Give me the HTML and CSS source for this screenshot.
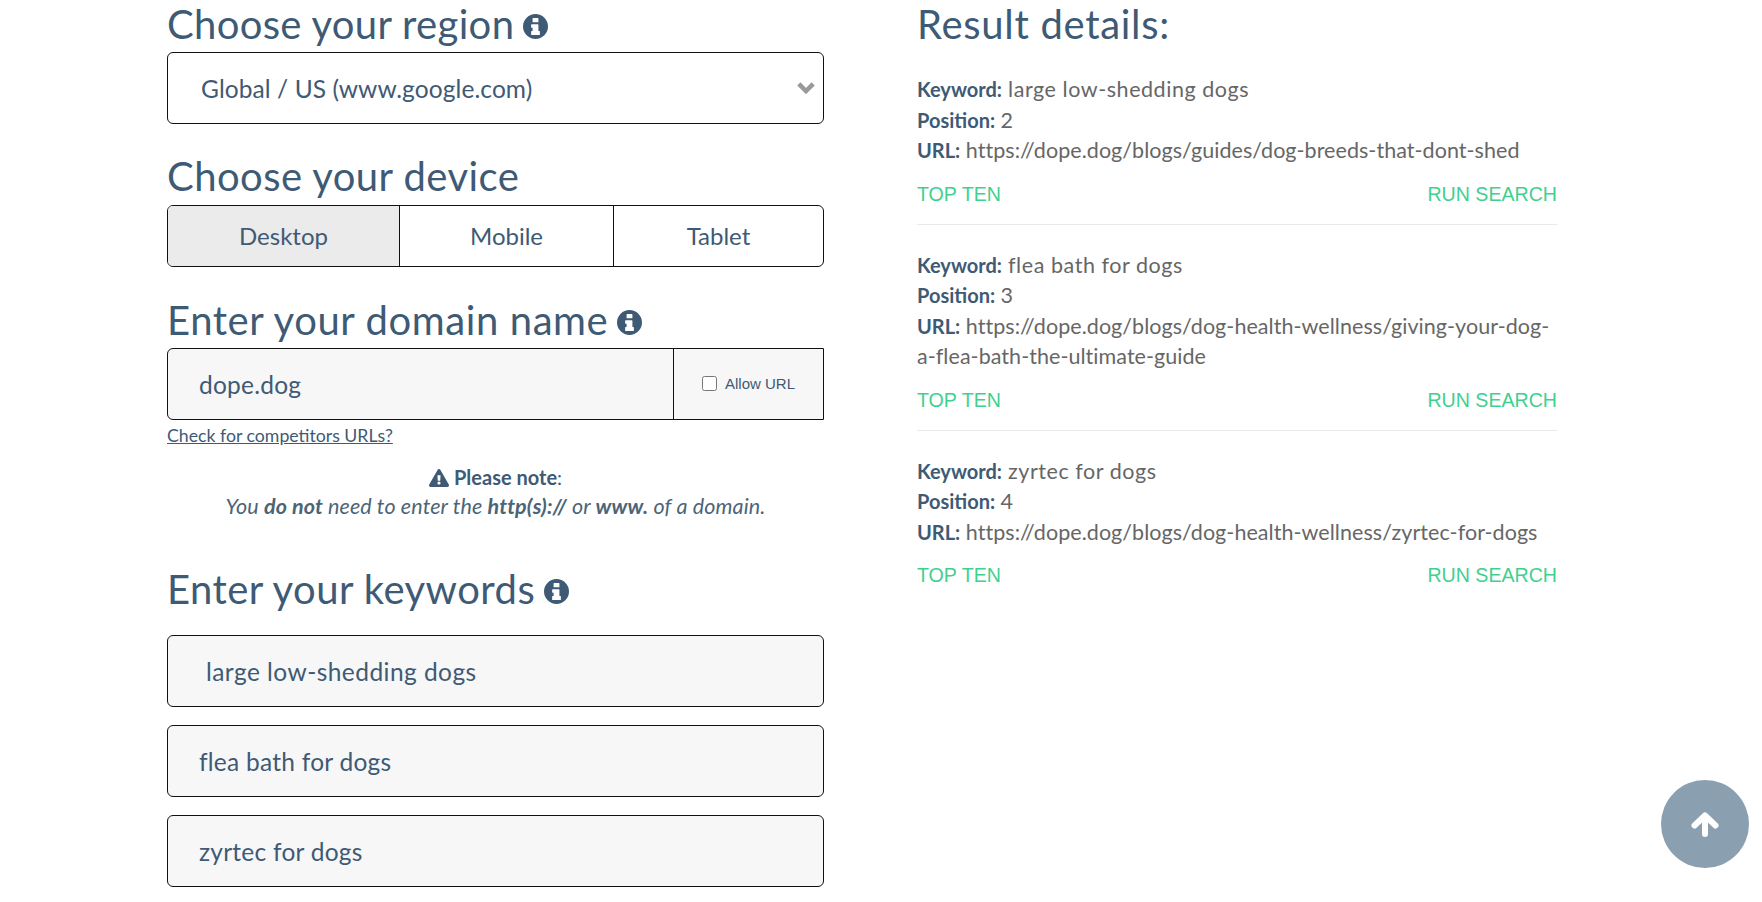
FILE: index.html
```html
<!DOCTYPE html>
<html lang="en">
<head>
<meta charset="utf-8">
<title>Rank checker</title>
<link rel="stylesheet" href="styles.css">
</head>
<body>
<svg class="sprite" width="0" height="0" aria-hidden="true">
  <symbol id="info" viewBox="0 0 24 24"><path fill-rule="evenodd" d="M12 0a12 12 0 1 1 0 24a12 12 0 0 1 0-24zM9.6 3.8h4.8a.4.4 0 0 1 .4.4v3.4a.4.4 0 0 1-.4.4H9.6a.4.4 0 0 1-.4-.4V4.200a.4.4 0 0 1 .4-.4zM8.200 9.800h6.200a.4.4 0 0 1 .4.4v6.200h1a.4.4 0 0 1 .4.4v3a.4.4 0 0 1-.4.4H8.200a.4.4 0 0 1-.4-.4v-3a.4.4 0 0 1 .4-.4h1v-3.200h-1a.4.4 0 0 1-.4-.4v-2.600a.4.4 0 0 1 .4-.4z"/></symbol>
</svg>
<main class="page">
  <section class="form-col">
    <h2 class="heading heading-region">Choose your region <svg class="info"><use href="#info"/></svg></h2>
    <div class="field field-select">
      <span>Global / US (www.google.com)</span>
      <svg class="chevron" viewBox="0 0 20 13"><path d="M2.800 2.800 10 10 17.200 2.800"/></svg>
    </div>
    <h2 class="heading heading-device">Choose your device</h2>
    <div class="devices">
      <div class="device device-desktop">Desktop</div>
      <div class="device device-mobile">Mobile</div>
      <div class="device device-tablet">Tablet</div>
    </div>
    <h2 class="heading heading-domain">Enter your domain name <svg class="info"><use href="#info"/></svg></h2>
    <div class="domain">
      <div class="domain-input">dope.dog</div>
      <label class="allow"><input type="checkbox" class="allow-box"><span>Allow URL</span></label>
    </div>
    <a class="competitors" href="#">Check for competitors URLs?</a>
    <div class="note">
      <p class="note-title"><svg class="warn" viewBox="0 0 576 512"><path d="M569.517 440.013C587.975 472.007 564.806 512 527.94 512H48.054c-36.937 0-59.999-40.055-41.577-71.987L246.423 23.985c18.467-32.009 64.72-31.951 83.154 0l239.94 416.028zM288 354c-25.405 0-46 20.595-46 46s20.595 46 46 46 46-20.595 46-46-20.595-46-46-46zm-43.673-165.346l7.418 136c.347 6.364 5.609 11.346 11.982 11.346h48.546c6.373 0 11.635-4.982 11.982-11.346l7.418-136c.375-6.874-5.098-12.654-11.982-12.654h-63.383c-6.884 0-12.356 5.78-11.981 12.654z"/></svg> <strong>Please note</strong>:</p>
      <p class="note-text">You <strong>do not</strong> need to enter the <strong>http(s)://</strong> or <strong>www.</strong> of a domain.</p>
    </div>
    <h2 class="heading heading-keywords">Enter your keywords <svg class="info"><use href="#info"/></svg></h2>
    <div class="keywords">
      <div class="field field-input field-first">large low-shedding dogs</div>
      <div class="field field-input">flea bath for dogs</div>
      <div class="field field-input">zyrtec for dogs</div>
    </div>
  </section>
  <section class="result-col">
    <h2 class="heading result-title">Result details:</h2>
    <article class="result">
      <p class="keyword"><b>Keyword:</b> large low-shedding dogs</p>
      <p><b>Position:</b> 2</p>
      <p><b>URL:</b> https://dope.dog/blogs/guides/dog-breeds-that-dont-shed</p>
      <div class="actions"><a href="#">TOP TEN</a><a href="#">RUN SEARCH</a></div>
    </article>
    <article class="result">
      <p class="keyword"><b>Keyword:</b> flea bath for dogs</p>
      <p><b>Position:</b> 3</p>
      <p><b>URL:</b> https://dope.dog/blogs/dog-health-wellness/giving-your-dog-a-flea-bath-the-ultimate-guide</p>
      <div class="actions"><a href="#">TOP TEN</a><a href="#">RUN SEARCH</a></div>
    </article>
    <article class="result result-last">
      <p class="keyword"><b>Keyword:</b> zyrtec for dogs</p>
      <p><b>Position:</b> 4</p>
      <p><b>URL:</b> https://dope.dog/blogs/dog-health-wellness/zyrtec-for-dogs</p>
      <div class="actions"><a href="#">TOP TEN</a><a href="#">RUN SEARCH</a></div>
    </article>
  </section>
</main>
<a class="to-top" href="#" aria-label="Back to top"><svg viewBox="0 0 28 25"><path d="M14 22V4M3.500 13.500 14 3.500 24.500 13.500"/></svg></a>
</body>
</html>
```
FILE: styles.css
```css
* { box-sizing: border-box; }
html, body { margin: 0; height: 902px; overflow: hidden; background: #fff; }
body { font-family: "Lato", "Open Sans", sans-serif; color: #3e5a75; }
.sprite { position: absolute; }
.page { display: flex; gap: 93px; padding-left: 167px; }
.form-col { width: 657px; flex: none; }
.result-col { width: 640px; flex: none; }
.heading { margin: 0; font-size: 40px; font-weight: 400; line-height: 48px; color: #3e5a75; letter-spacing: 0.45px; display: flex; align-items: center; gap: 9px; }
.heading-region { height: 48px; margin-bottom: 4px; letter-spacing: 0.33px; }
.heading-device { margin-top: 25px; height: 56px; padding-bottom: 2px; }
.heading-domain { margin-top: 25px; height: 56px; letter-spacing: 0.6px; }
.heading-keywords { margin-top: 40px; height: 56px; }
.info { width: 25px; height: 25px; fill: #3e5a75; margin-top: 4px; }
.field { height: 72px; border: 1px solid #111; border-radius: 6px; display: flex; align-items: center; font-size: 24.5px; letter-spacing: 0.25px; }
.field-select { padding: 0 7px 0 33px; justify-content: space-between; background: #fff; letter-spacing: 0.1px; }
.chevron { width: 20px; height: 13px; margin-top: -2px; fill: none; stroke: #999; stroke-width: 4.5; }
.devices { display: flex; height: 62px; border: 1px solid #111; border-radius: 6px; overflow: hidden; }
.device { display: flex; align-items: center; justify-content: center; font-size: 24px; padding-bottom: 2px; }
.device + .device { border-left: 1px solid #111; }
.device-desktop { width: 231px; background: #ebebeb; }
.device-mobile { width: 214px; }
.device-tablet { flex: 1; }
.domain { display: flex; height: 72px; border: 1px solid #111; border-radius: 6px 0 0 6px; background: #f7f7f7; }
.domain-input { flex: 1; display: flex; align-items: center; padding: 0 31px; font-size: 24.5px; letter-spacing: 0.25px; }
.allow { width: 150px; border-left: 1px solid #111; display: flex; align-items: center; justify-content: center; gap: 8px; font-family: "Liberation Sans", sans-serif; font-size: 15px; padding-bottom: 2px; }
.allow-box { margin: 0; width: 15px; height: 15px; }
.competitors { display: block; margin-top: 6px; font-size: 17.7px; line-height: 20px; color: #3e5a75; }
.note { text-align: center; margin-top: 17px; font-size: 20px; line-height: 29px; }
.note p { margin: 0; }
.note-text { font-style: italic; font-size: 21.5px; letter-spacing: 0.13px; color: #4c6478; }
.warn { width: 20px; height: 18px; fill: #3e5a75; vertical-align: -2px; }
.keywords { display: flex; flex-direction: column; gap: 18px; margin-top: 18px; }
.field-input { background: #f7f7f7; padding: 0 31px; }
.field-first { padding-left: 38px; letter-spacing: 0.45px; }
.result-title { height: 48px; margin-bottom: 4px; letter-spacing: 0.7px; }
.result { margin-top: 26px; padding-bottom: 15px; border-bottom: 1px solid #eaeaea; font-size: 21.5px; letter-spacing: 0.05px; line-height: 30.5px; color: #666; }
.result + .result { margin-top: 25px; }
.result p { margin: 0; overflow-wrap: anywhere; }
.result .keyword { letter-spacing: 0.55px; }
.result b { color: #3e5a75; font-weight: 700; font-size: 20px; letter-spacing: 0; }
.result-last { border-bottom: 0; }
.actions { display: flex; justify-content: space-between; margin-top: 13px; font-family: "Liberation Sans", sans-serif; font-size: 19.6px; letter-spacing: 0; line-height: 30px; }
.actions a { color: #3fd08f; text-decoration: none; }
.to-top { position: fixed; left: 1661px; top: 780px; width: 88px; height: 88px; border-radius: 50%; background: #8a9fb0; display: flex; align-items: center; justify-content: center; }
.to-top svg { width: 28px; height: 25px; fill: none; stroke: #fff; stroke-width: 6; stroke-linecap: round; stroke-linejoin: round; }
```
